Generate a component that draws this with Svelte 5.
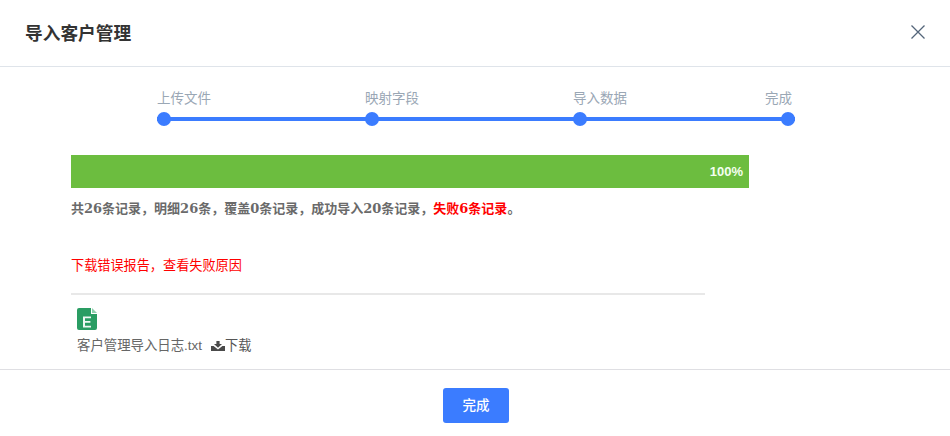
<script>
  const steps = ['上传文件', '映射字段', '导入数据', '完成'];
</script>

<div class="dialog">
  <header class="head">
    <h2>导入客户管理</h2>
    <button class="close" aria-label="关闭">
      <svg width="14" height="14" viewBox="0 0 14 14"><path d="M0.5 0.5L13.5 13.5M13.5 0.5L0.5 13.5" stroke="#54657a" stroke-width="1.3" fill="none"/></svg>
    </button>
  </header>

  <main class="body">
    <div class="steps">
      <div class="labels">
        {#each steps as s}<span>{s}</span>{/each}
      </div>
      <div class="track">
        {#each steps as s}<i class="dot"></i>{/each}
      </div>
    </div>

    <div class="progress"><div class="fill"><b>100%</b></div></div>
    <p class="summary">共26条记录，明细26条，覆盖0条记录，成功导入20条记录，<em>失败6条记录</em>。</p>
    <p class="err">下载错误报告，查看失败原因</p>
    <div class="file">
      <svg class="ficon" width="20" height="22" viewBox="0 0 20 22">
        <path d="M2 0H14V6H20V20a2 2 0 0 1-2 2H2a2 2 0 0 1-2-2V2a2 2 0 0 1 2-2Z" fill="#2a9d63"/>
        <path d="M15 0L20 5H15Z" fill="#8fcfae"/>
        <path d="M6 8.5H14V10.3H8V13H13.4V14.8H8V17.7H14V19.5H6Z" fill="#eef8f3"/>
      </svg>
      <div class="fline">
        <span>客户管理导入日志.txt</span>
        <span class="dl">
          <svg width="14" height="10" viewBox="0 0 14 10"><path d="M5.4 0H8.6V3H11L7 6.8L3 3H5.4ZM0 5H2.6L7 8.4L11.4 5H14V10H0Z" fill="#4a4a4a"/></svg><span>下载</span>
        </span>
      </div>
    </div>
  </main>

  <footer class="foot"><button class="done">完成</button></footer>
</div>

<style>
  :global(body) { margin: 0; background: #fff; }
  .dialog {
    width: 950px; height: 436px; display: flex; flex-direction: column;
    font-family: "Liberation Sans", "Noto Sans CJK SC", sans-serif; font-size: 13.15px; color: #666;
  }
  .head {
    flex: none; height: 64px; border-bottom: 1px solid #dfe4ea;
    display: flex; align-items: center; justify-content: space-between;
    padding: 0 25px 2px 25px;
  }
  h2 { margin: 0; font-size: 17.7px; font-weight: 700; color: #333; }
  .close { border: 0; background: none; padding: 0; width: 14px; height: 14px; display: flex; }
  .body { flex: 1; min-height: 0; padding: 0 0 0 71px; border-bottom: 1px solid #dfdfe3; }
  .steps { width: 638px; margin: 22px 0 0 86px; }
  .labels { display: grid; grid-template-columns: 208px 208px 192px auto; color: #9aa7b5; height: 20px; line-height: 20px; font-size: 13.5px; margin-bottom: 8px; white-space: nowrap; }
  .track { height: 4px; background: #3b7cff; display: flex; justify-content: space-between; align-items: center; }
  .dot { width: 14px; height: 14px; border-radius: 50%; background: #3b7cff; }
  .progress { width: 678px; height: 33px; margin-top: 34px; background: #6cbd3f; }
  .fill { height: 100%; display: flex; align-items: center; justify-content: flex-end; padding-right: 6px; }
  .fill b { color: #f4fff0; font: 700 13px "Liberation Sans", sans-serif; }
  .summary { margin: 12px 0 0; font: 700 13px/17px "DejaVu Serif", "Noto Sans CJK SC", serif; color: #6a6a6a; }
  em { font-style: normal; color: #f00; }
  .err { margin: 41px 0 0; line-height: 16px; color: #f00; }
  .file { width: 634px; box-sizing: border-box; margin-top: 19px; border-top: 2px solid #e8e8e8; padding: 13px 0 0 6px; }
  .ficon { display: block; }
  .fline { display: flex; gap: 9px; margin-top: 7px; line-height: 18px; color: #666; font-size: 13.4px; }
  .dl { display: flex; align-items: center; color: #555; font-size: 13.15px; }
  .foot { height: 66px; flex: none; display: flex; justify-content: center; align-items: flex-start; padding: 18px 0 0 2px; box-sizing: border-box; }
  .done { width: 66px; height: 35px; padding: 0 0 3px; border: 0; border-radius: 3px; background: #3b7cff; color: #fff; font: 500 13.5px "Liberation Sans", "Noto Sans CJK SC", sans-serif; }
</style>
